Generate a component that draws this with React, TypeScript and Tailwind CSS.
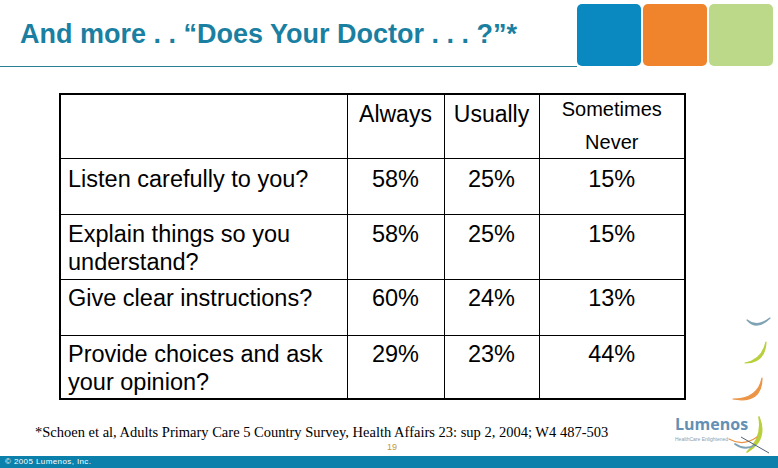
import React from "react";

const rows = [
  { q: "Listen carefully to you?", a: "58%", u: "25%", s: "15%", h: "h-[56px]", pt: "pt-[6px]" },
  { q: "Explain things so you understand?", a: "58%", u: "25%", s: "15%", h: "h-[65px]", pt: "pt-[5px]" },
  { q: "Give clear instructions?", a: "60%", u: "24%", s: "13%", h: "h-[56px]", pt: "pt-[4px]" },
  { q: "Provide choices and ask your opinion?", a: "29%", u: "23%", s: "44%", h: "h-[64px]", pt: "pt-[4px]" },
];

function Arcs() {
  return (
    <svg className="absolute left-[725px] top-[300px]" width="53" height="110" viewBox="0 0 53 110">
      <path d="M22 20 Q32 31 45 18 Q32 28 22 20 Z" stroke="#7fa3b5" strokeWidth="1.2" fill="#7fa3b5" strokeLinejoin="round" />
      <path d="M20 63 Q40 63 41 42 Q37 60 20 63 Z" stroke="#b9cf3c" strokeWidth="1.2" fill="#b9cf3c" strokeLinejoin="round" />
      <path d="M8 99 Q37 104 37 78 Q33 99 8 99 Z" stroke="#ec9446" strokeWidth="1.2" fill="#ec9446" strokeLinejoin="round" />
    </svg>
  );
}

function Logo() {
  return (
    <div className="absolute left-[675px] top-[414px] w-[103px] h-[42px]">
      <div className="text-[#6390b4] font-bold text-[16px] leading-[20px]" style={{ fontFamily: '"Open Sans", "Liberation Sans", sans-serif' }}>
        Lumenos
      </div>
      <div className="text-[#8aa0b0] text-[5px] leading-[6px] mt-[2px] whitespace-nowrap" style={{ fontFamily: '"Liberation Sans", sans-serif' }}>
        HealthCare Enlightened
      </div>
      <svg className="absolute left-[52px] top-[0px]" width="46" height="44" viewBox="0 0 46 44">
        <path d="M32 3 Q41 26 20 38 Q36 24 32 3 Z" stroke="#b9cf3c" strokeWidth="1.6" fill="#b9cf3c" strokeLinejoin="round" />
        <path d="M2 25 Q16 33 30 23" stroke="#ec9446" strokeWidth="1.2" fill="none" strokeLinecap="round" />
        <path d="M8 30 Q18 37 28 31" stroke="#7fa3b5" strokeWidth="1.8" fill="none" strokeLinecap="round" />
        <path d="M14 23 L42 39" stroke="#4f6373" strokeWidth="1" fill="none" />
      </svg>
    </div>
  );
}

export default function App() {
  return (
    <div className="relative w-[778px] h-[468px] bg-white overflow-hidden" style={{ fontFamily: '"Liberation Sans", Arial, sans-serif' }}>
      {/* header */}
      <div className="flex h-[67px]">
        <div className="flex-1 h-[67px] border-b border-[#2a7f97] pl-[20px] pt-[19px]">
          <h1 className="text-[#1a7fa1] font-bold text-[27px] leading-[30px] whitespace-nowrap">
            And more . . “Does Your Doctor . . . ?”*
          </h1>
        </div>
        <div className="flex gap-[2px] pt-[4px] pr-[5px]">
          <div className="w-[64px] h-[62px] rounded-[5px] bg-[#0a88c0]" />
          <div className="w-[64px] h-[62px] rounded-[5px] bg-[#f0842c]" />
          <div className="w-[64px] h-[62px] rounded-[5px] bg-[#bcd98a]" />
        </div>
      </div>

      {/* table */}
      <div className="pl-[59px] pt-[26px]">
        <table className="border-collapse border-2 border-black text-black table-fixed w-[625px]">
          <colgroup>
            <col className="w-[287px]" />
            <col className="w-[97px]" />
            <col className="w-[95px]" />
            <col className="w-[146px]" />
          </colgroup>
          <tbody>
            <tr className="h-[64px]">
              <td className="border border-black" />
              <td className="border border-black align-top text-center text-[23px] leading-[28px] pt-[5px]">Always</td>
              <td className="border border-black align-top text-center text-[23px] leading-[28px] pt-[5px]">Usually</td>
              <td className="border border-black align-top text-center text-[20px]">
                <div className="h-[58px] -mt-[2px] leading-[33px]">
                  Sometimes
                  <br />
                  Never
                </div>
              </td>
            </tr>
            {rows.map((r) => (
              <tr key={r.q} className={r.h}>
                <td className={`border border-black align-top text-left text-[23.5px] leading-[28px] pl-[7px] pr-[4px] ${r.pt}`}>{r.q}</td>
                <td className={`border border-black align-top text-center text-[23.5px] leading-[28px] ${r.pt}`}>{r.a}</td>
                <td className={`border border-black align-top text-center text-[23.5px] leading-[28px] ${r.pt}`}>{r.u}</td>
                <td className={`border border-black align-top text-center text-[23.5px] leading-[28px] ${r.pt}`}>{r.s}</td>
              </tr>
            ))}
          </tbody>
        </table>
      </div>

      {/* footnote */}
      <div className="pl-[35px] pt-[23px] text-[14.5px] leading-[18px] text-black whitespace-nowrap" style={{ fontFamily: '"Liberation Serif", "DejaVu Serif", serif' }}>
        *Schoen et al, Adults Primary Care 5 Country Survey, Health Affairs 23: sup 2, 2004; W4 487-503
      </div>
      <div className="pl-[387px] pt-[1px] text-[9px] leading-[10px] text-[#c29a3a]">19</div>

      {/* bottom bar */}
      <div className="absolute left-0 right-0 bottom-0 h-[12px] bg-[#0a80aa] flex items-center pl-[5px]">
        <span className="text-white text-[8px] leading-[10px] tracking-[0.4px]">© 2005 Lumenos, Inc.</span>
      </div>

      <Arcs />
      <Logo />
    </div>
  );
}
